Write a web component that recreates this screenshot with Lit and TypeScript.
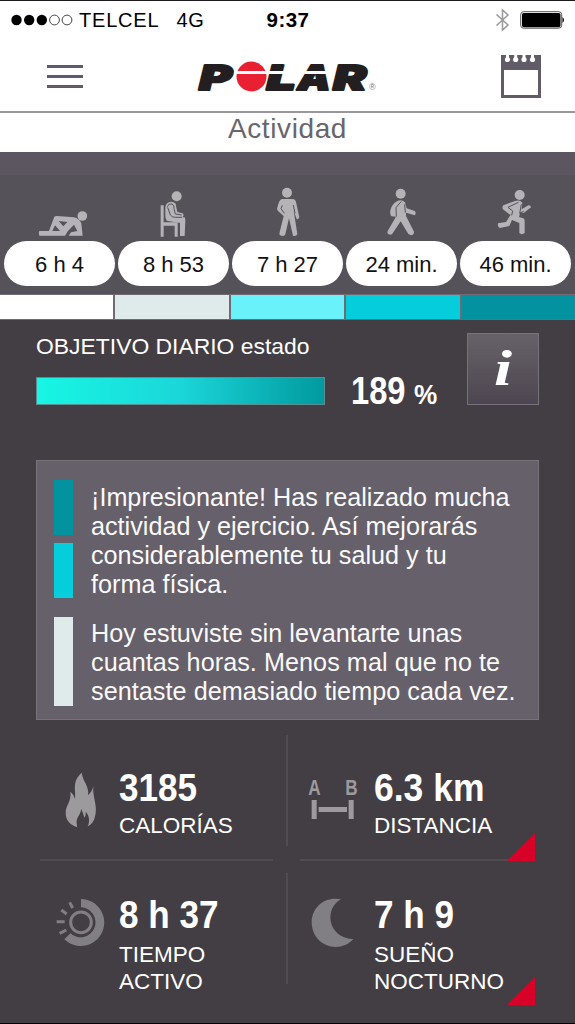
import { LitElement, html, css, svg } from "lit";
import { customElement } from "lit/decorators.js";

const figures = {
  lying: svg`<svg class="figure" viewBox="12 75 333 195">
    <circle cx="247" cy="198" r="14.500"/>
    <path d="M118 243H147L163 200Q165 198 170 198L222 202Q238 206 244 220L248 257H206L213 247L232 243L222 224L204 243L195 257H118Q114 250 118 243Z"/>
    <path class="cut" d="M176 213L202 216L190 229ZM165 226L180 243H157Z"/>
  </svg>`,
  sitting: svg`<svg class="figure" viewBox="354 75 333 195">
    <circle cx="530" cy="139" r="15"/>
    <path d="M482 166H491V217H533V260H524V227H491V260H482Z"/>
    <path d="M496 172Q498 156 514 155Q530 157 528 168L532 186L548 190Q554 197 547 202H554Q556 204 556 212L554 258H540V219L500 212Q496 205 496 198Z"/>
    <path class="seam" d="M502 170Q506 159 516 162Q524 165 522 176L526 192L545 195M503 172L511 195Q516 202 526 202H546"/>
  </svg>`,
  standing: svg`<svg class="figure" viewBox="696 75 333 195">
    <circle cx="861" cy="128" r="15"/>
    <path d="M846 147H877Q886 147 888 156L898 202Q896 209 890 207L881 182L892 252Q889 260 879 257L867 205L856 253Q853 261 840 256Q837 254 839 247L851 198L834 183Q829 176 833 169Q837 150 846 147Z"/>
    <path class="seam" d="M847 166L843 176L853 190M880 165L885 190"/>
  </svg>`,
  walking: svg`<svg class="figure" viewBox="183 75 333 195">
    <circle cx="347" cy="131" r="15"/>
    <path d="M336 154Q349 147 360 157L365 175L389 183Q395 189 389 196L363 188V198L387 245Q387 255 378 256L370 252L347 214L321 253Q312 256 307 249L308 243L333 200L320 199Q314 195 316 181Q321 162 336 154Z"/>
    <path class="seam" d="M349 154L333 173L334 200M359 163L361 188"/>
  </svg>`,
  running: svg`<svg class="figure" viewBox="525 75 333 195">
    <circle cx="704" cy="135" r="15"/>
    <path d="M655 166L690 153Q705 149 712 158L710 178L730 166Q737 165 738 172L716 189L706 187L702 201L715 205Q719 207 719 214V249Q711 256 703 249V219L681 210L673 228L644 234Q637 230 639 220L663 216L677 194L673 193L653 177Q651 170 655 166Z"/>
    <path class="seam" d="M700 157L669 172L683 183L680 196M709 163L704 190L716 184"/>
  </svg>`,
};

const activities = [
  { figure: figures.lying, time: "6 h 4", tone: "rest" },
  { figure: figures.sitting, time: "8 h 53", tone: "sit" },
  { figure: figures.standing, time: "7 h 27", tone: "low" },
  { figure: figures.walking, time: "24 min.", tone: "medium" },
  { figure: figures.running, time: "46 min.", tone: "high" },
];

const flame = svg`<svg class="glyph" viewBox="18 30 249 330"><path d="M155 143C158 168 179 186 174 211C181 205 188 195 190 183C187 213 201 237 197 264C194 286 186 299 173 304C180 288 178 272 167 260C168 269 166 275 163 278C160 267 157 258 153 251C154 265 142 274 140 287C139 296 142 300 141 306C121 299 107 287 107 263C107 240 125 230 121 200C128 205 132 212 135 222C139 198 124 170 155 143Z"/></svg>`;

const distance = svg`<svg class="glyph" viewBox="24 30 258 330">
  <text class="mark" transform="translate(85 210) scale(.78 1)">A</text>
  <text class="mark" transform="translate(196 210) scale(.78 1)">B</text>
  <path d="M95 225h15v57H95zM206 225h15v57h-15zM116 246h85v15h-85z"/></svg>`;

const sun = svg`<svg class="glyph dim" viewBox="18 9 249 330">
  <path d="M153 87A70.500 70.500 0 1 1 103 208L121 190A45 45 0 1 0 153 112Z"/>
  <circle class="line" cx="153" cy="157" r="31"/>
  <path class="ray" d="M119 97L128 114M94 120L110 132M80 155H104M89 190L109 180"/></svg>`;

const moon = svg`<svg class="glyph dim" viewBox="24 9 258 330"><path d="M183 88C135 112 137 201 220 208C178 253 96 229 95 157C95 111 135 78 183 88Z"/></svg>`;

const stats = [
  { icon: flame, value: "3185", label: ["CALORÍAS"], flag: false },
  { icon: distance, value: "6.3 km", label: ["DISTANCIA"], flag: true },
  { icon: sun, value: "8 h 37", label: ["TIEMPO", "ACTIVO"], flag: false },
  { icon: moon, value: "7 h 9", label: ["SUEÑO", "NOCTURNO"], flag: true },
];

@customElement("app-root")
export class AppRoot extends LitElement {
  static styles = css`
    :host { display: block; width: 575px; height: 1024px; box-sizing: border-box; overflow: hidden;
      background: #433e44; color: #fff; border-top: 1px solid #1c1a1f; border-bottom: 1px solid #000;
      font-family: "Liberation Sans", Arial, sans-serif; }
    * { box-sizing: border-box; }
    svg { display: block; overflow: visible; }
    .status { display: grid; grid-template-columns: 1fr auto 1fr; align-items: center; height: 38px;
      padding: 0 10px 0 11px; background: #fff; color: #000; font-size: 20px; line-height: 38px; }
    .carrier { display: flex; align-items: center; }
    .dots { margin-right: 7px; }
    .telcel { letter-spacing: .8px; }
    .network { margin-left: 17px; letter-spacing: .7px; }
    .clock { font-weight: bold; font-size: 20.500px; letter-spacing: .5px; }
    .power { display: flex; justify-content: flex-end; align-items: center; gap: 10px; }
    .nav { display: flex; justify-content: space-between; align-items: flex-start; height: 74px;
      padding: 15px 34px 0 47px; background: #fff; border-bottom: 2px solid #99979b; }
    .menu { margin-top: 10px; }
    .logo { margin: 4px 7px 0 0; }
    .brand { font: italic 900 34.500px Inter, "Liberation Sans", sans-serif; fill: #231f20; stroke: #231f20; stroke-width: 2; stroke-linejoin: round; }
    .reg { font-size: 9px; fill: #777; }
    .title { height: 39px; background: #fff; color: #68656d; text-align: center; font-size: 28px;
      line-height: 32px; letter-spacing: .6px; font-weight: normal; margin: 0; }
    .band { height: 23px; background: #5c5661; }
    .activities { height: 119px; padding: 0 4px; display: grid; grid-template-columns: repeat(5, 111px);
      gap: 3px; background: #565259; }
    .figure { width: 111px; height: 65px; fill: #b5b2b8; }
    .cut { fill: #565259; }
    .seam { fill: none; stroke: #565259; stroke-width: 3; }
    .pill { margin-top: 1px; height: 45px; border-radius: 23px; background: #fff; color: #111; text-align: center;
      font-size: 22px; line-height: 47px; }
    .strip { display: grid; grid-template-columns: repeat(5, 1fr); gap: 2px; height: 26px; padding: 1px 0;
      background: #716a75; }
    .rest { background: #fff; }
    .sit { background: #dfeaea; }
    .low { background: #6af2fb; }
    .medium { background: #06cddb; }
    .high { background: #0292a0; }
    .goal { display: flex; justify-content: space-between; height: 140px; padding: 13px 36px 0; }
    .goal-title { font-size: 22.900px; line-height: 27px; }
    .progress { display: flex; align-items: flex-end; margin-top: 17px; height: 28px; }
    .bar { width: 289px; height: 28px; border: 1px solid #5d8d90;
      background: linear-gradient(90deg, #17f6e4, #1bd6d9 50%, #009a9f); }
    .percent { display: flex; align-items: baseline; margin-left: 26px; height: 34px; line-height: 40px; font-weight: bold; }
    .number { width: 63px; font-size: 38px; transform: scaleX(.86); transform-origin: left; }
    .sign { font-size: 27px; transform: scaleX(.97); transform-origin: left; }
    .info { width: 72px; height: 72px; border: 1px solid #77717d; background: linear-gradient(#676169, #4d4650);
      display: flex; justify-content: center; font: italic bold 50px/68px "Liberation Serif", serif; }
    .info span { transform: scaleX(1.300); }
    .feedback { margin: 0 36px; width: 503px; height: 260px; padding: 19px 17px 0; background: #656069;
      border: 1px solid #77727a; display: flex; flex-direction: column; gap: 18px; font-size: 25.200px;
      line-height: 29.200px; color: #faf9fb; }
    .note { display: flex; gap: 18px; }
    .note p { margin: 0; padding-top: 2.500px; white-space: nowrap; }
    .note + .note p { padding-top: 1.200px; letter-spacing: .05px; }
    .levels { width: 19px; height: 118px; display: flex; flex-direction: column; gap: 8px; flex: none; }
    .levels i { flex: 1; }
    .levels.short { height: 89px; }
    .stats { margin: 15px 36px 0; display: grid; grid-template-columns: 252px 251px; }
    .stat { position: relative; display: flex; height: 138px; }
    .stat:nth-child(odd)::after { content: ""; position: absolute; right: 0; top: 0; width: 2px; height: 111px; background: #514c53; }
    .stat:nth-child(-n+2)::before { content: ""; position: absolute; top: 124px; left: 4px; width: 233px; height: 2px; background: #514c53; }
    .stat:nth-child(2)::before { left: 12px; width: 212px; }
    .glyph { flex: none; width: 83px; height: 110px; fill: #9d9a9e; }
    .stat:nth-child(even) .glyph { width: 86px; }
    .glyph.dim { fill: #817e84; }
    .line { fill: none; stroke: #817e84; stroke-width: 9; }
    .ray { stroke: #817e84; stroke-width: 9; }
    .mark { font-size: 66px; font-weight: bold; }
    .copy { padding-top: 31px; white-space: nowrap; }
    .stat:nth-child(n+3) .copy { padding-top: 20px; }
    .value { font-size: 39px; line-height: 44px; font-weight: bold; transform: scaleX(.9); transform-origin: left; }
    .stat:nth-child(2) .value { transform: scaleX(.91); }
    .label { font-size: 22.500px; line-height: 27px; margin-top: 2px; }
    .stat:nth-child(n+3) .label { margin-top: 3.500px; }
    .flag { position: absolute; right: 4px; top: 98px; width: 28px; height: 28px; background: #d80128;
      clip-path: polygon(100% 0, 100% 100%, 0 100%); }
    .stat:nth-child(4) .flag { top: 104px; }
  `;

  render() {
    return html`
      <div class="status">
        <div class="carrier">
          <svg class="dots" width="61" height="12" viewBox="0 0 61 12">
            <circle cx="5.500" cy="6" r="5.200"/><circle cx="18.200" cy="6" r="5.200"/><circle cx="30.800" cy="6" r="5.200"/>
            <g fill="none" stroke="#444" stroke-width="1"><circle cx="43.500" cy="6" r="4.900"/><circle cx="56" cy="6" r="4.900"/></g>
          </svg>
          <span class="telcel">TELCEL</span><span class="network">4G</span>
        </div>
        <span class="clock">9:37</span>
        <div class="power">
          <svg width="15" height="24" viewBox="0 0 15 24" fill="none" stroke="#999" stroke-width="1.500"><path d="M1.500 6.500L13 17L7.500 22V2L13 7L1.500 17.500"/></svg>
          <svg width="45" height="18" viewBox="0 0 45 18"><rect x=".7" y=".7" width="41" height="16.500" rx="3" fill="#fff" stroke="#555"/><rect x="2" y="2" width="38.500" height="14.200" rx="1.800"/><path d="M42.500 6Q45.500 9 42.500 12Z"/></svg>
        </div>
      </div>
      <div class="nav">
        <svg class="menu" width="36" height="25" viewBox="0 0 36 25"><path fill="#605b66" d="M0 1h36v3H0zM0 11h36v3H0zM0 21h36v3H0z"/></svg>
        <svg class="logo" width="182" height="36" viewBox="197 58 182 36">
          <text class="brand" transform="translate(199 90) scale(1.450 1)">P</text>
          <text class="brand" transform="translate(266.500 90) scale(1.500 1)">L</text>
          <text class="brand" transform="translate(297.500 90) scale(1.200 1)">A</text>
          <text class="brand" transform="translate(333 90) scale(1.450 1)">R</text>
          <path fill="#fff" d="M300 71h31v3h-31z"/>
          <circle cx="251.500" cy="76.500" r="15" fill="#e92032"/>
          <path fill="#fff" d="M236 71h62v3h-62z"/>
          <text class="reg" x="369" y="90">®</text>
        </svg>
        <svg width="41" height="45" viewBox="0 0 41 45">
          <path fill="#605b66" fill-rule="evenodd" d="M1 1H41V44H1ZM4 16V41H38V16Z"/>
          <g fill="#fff"><path d="M6 0h3v4h-3zM14.200 0h3v4h-3zM22.500 0h3v4h-3zM31 0h3v4h-3z"/>
          <circle cx="7.500" cy="5.500" r="2.600"/><circle cx="15.700" cy="5.500" r="2.600"/><circle cx="24" cy="5.500" r="2.600"/><circle cx="32.500" cy="5.500" r="2.600"/></g>
        </svg>
      </div>
      <h1 class="title">Actividad</h1>
      <div class="band"></div>
      <div class="activities">
        ${activities.map((a) => html`<div>${a.figure}<div class="pill">${a.time}</div></div>`)}
      </div>
      <div class="strip">${activities.map((a) => html`<div class=${a.tone}></div>`)}</div>
      <div class="goal">
        <div>
          <div class="goal-title">OBJETIVO DIARIO estado</div>
          <div class="progress">
            <div class="bar"></div>
            <div class="percent"><span class="number">189</span><span class="sign">%</span></div>
          </div>
        </div>
        <div class="info"><span>i</span></div>
      </div>
      <div class="feedback">
        <div class="note">
          <div class="levels"><i class="high"></i><i class="medium"></i></div>
          <p>¡Impresionante! Has realizado mucha<br>actividad y ejercicio. Así mejorarás<br>considerablemente tu salud y tu<br>forma física.</p>
        </div>
        <div class="note">
          <div class="levels short"><i class="sit"></i></div>
          <p>Hoy estuviste sin levantarte unas<br>cuantas horas. Menos mal que no te<br>sentaste demasiado tiempo cada vez.</p>
        </div>
      </div>
      <div class="stats">
        ${stats.map((s) => html`<div class="stat">
          ${s.icon}
          <div class="copy">
            <div class="value">${s.value}</div>
            <div class="label">${s.label.map((l) => html`<div>${l}</div>`)}</div>
          </div>
          ${s.flag ? html`<div class="flag"></div>` : ""}
        </div>`)}
      </div>
    `;
  }
}
